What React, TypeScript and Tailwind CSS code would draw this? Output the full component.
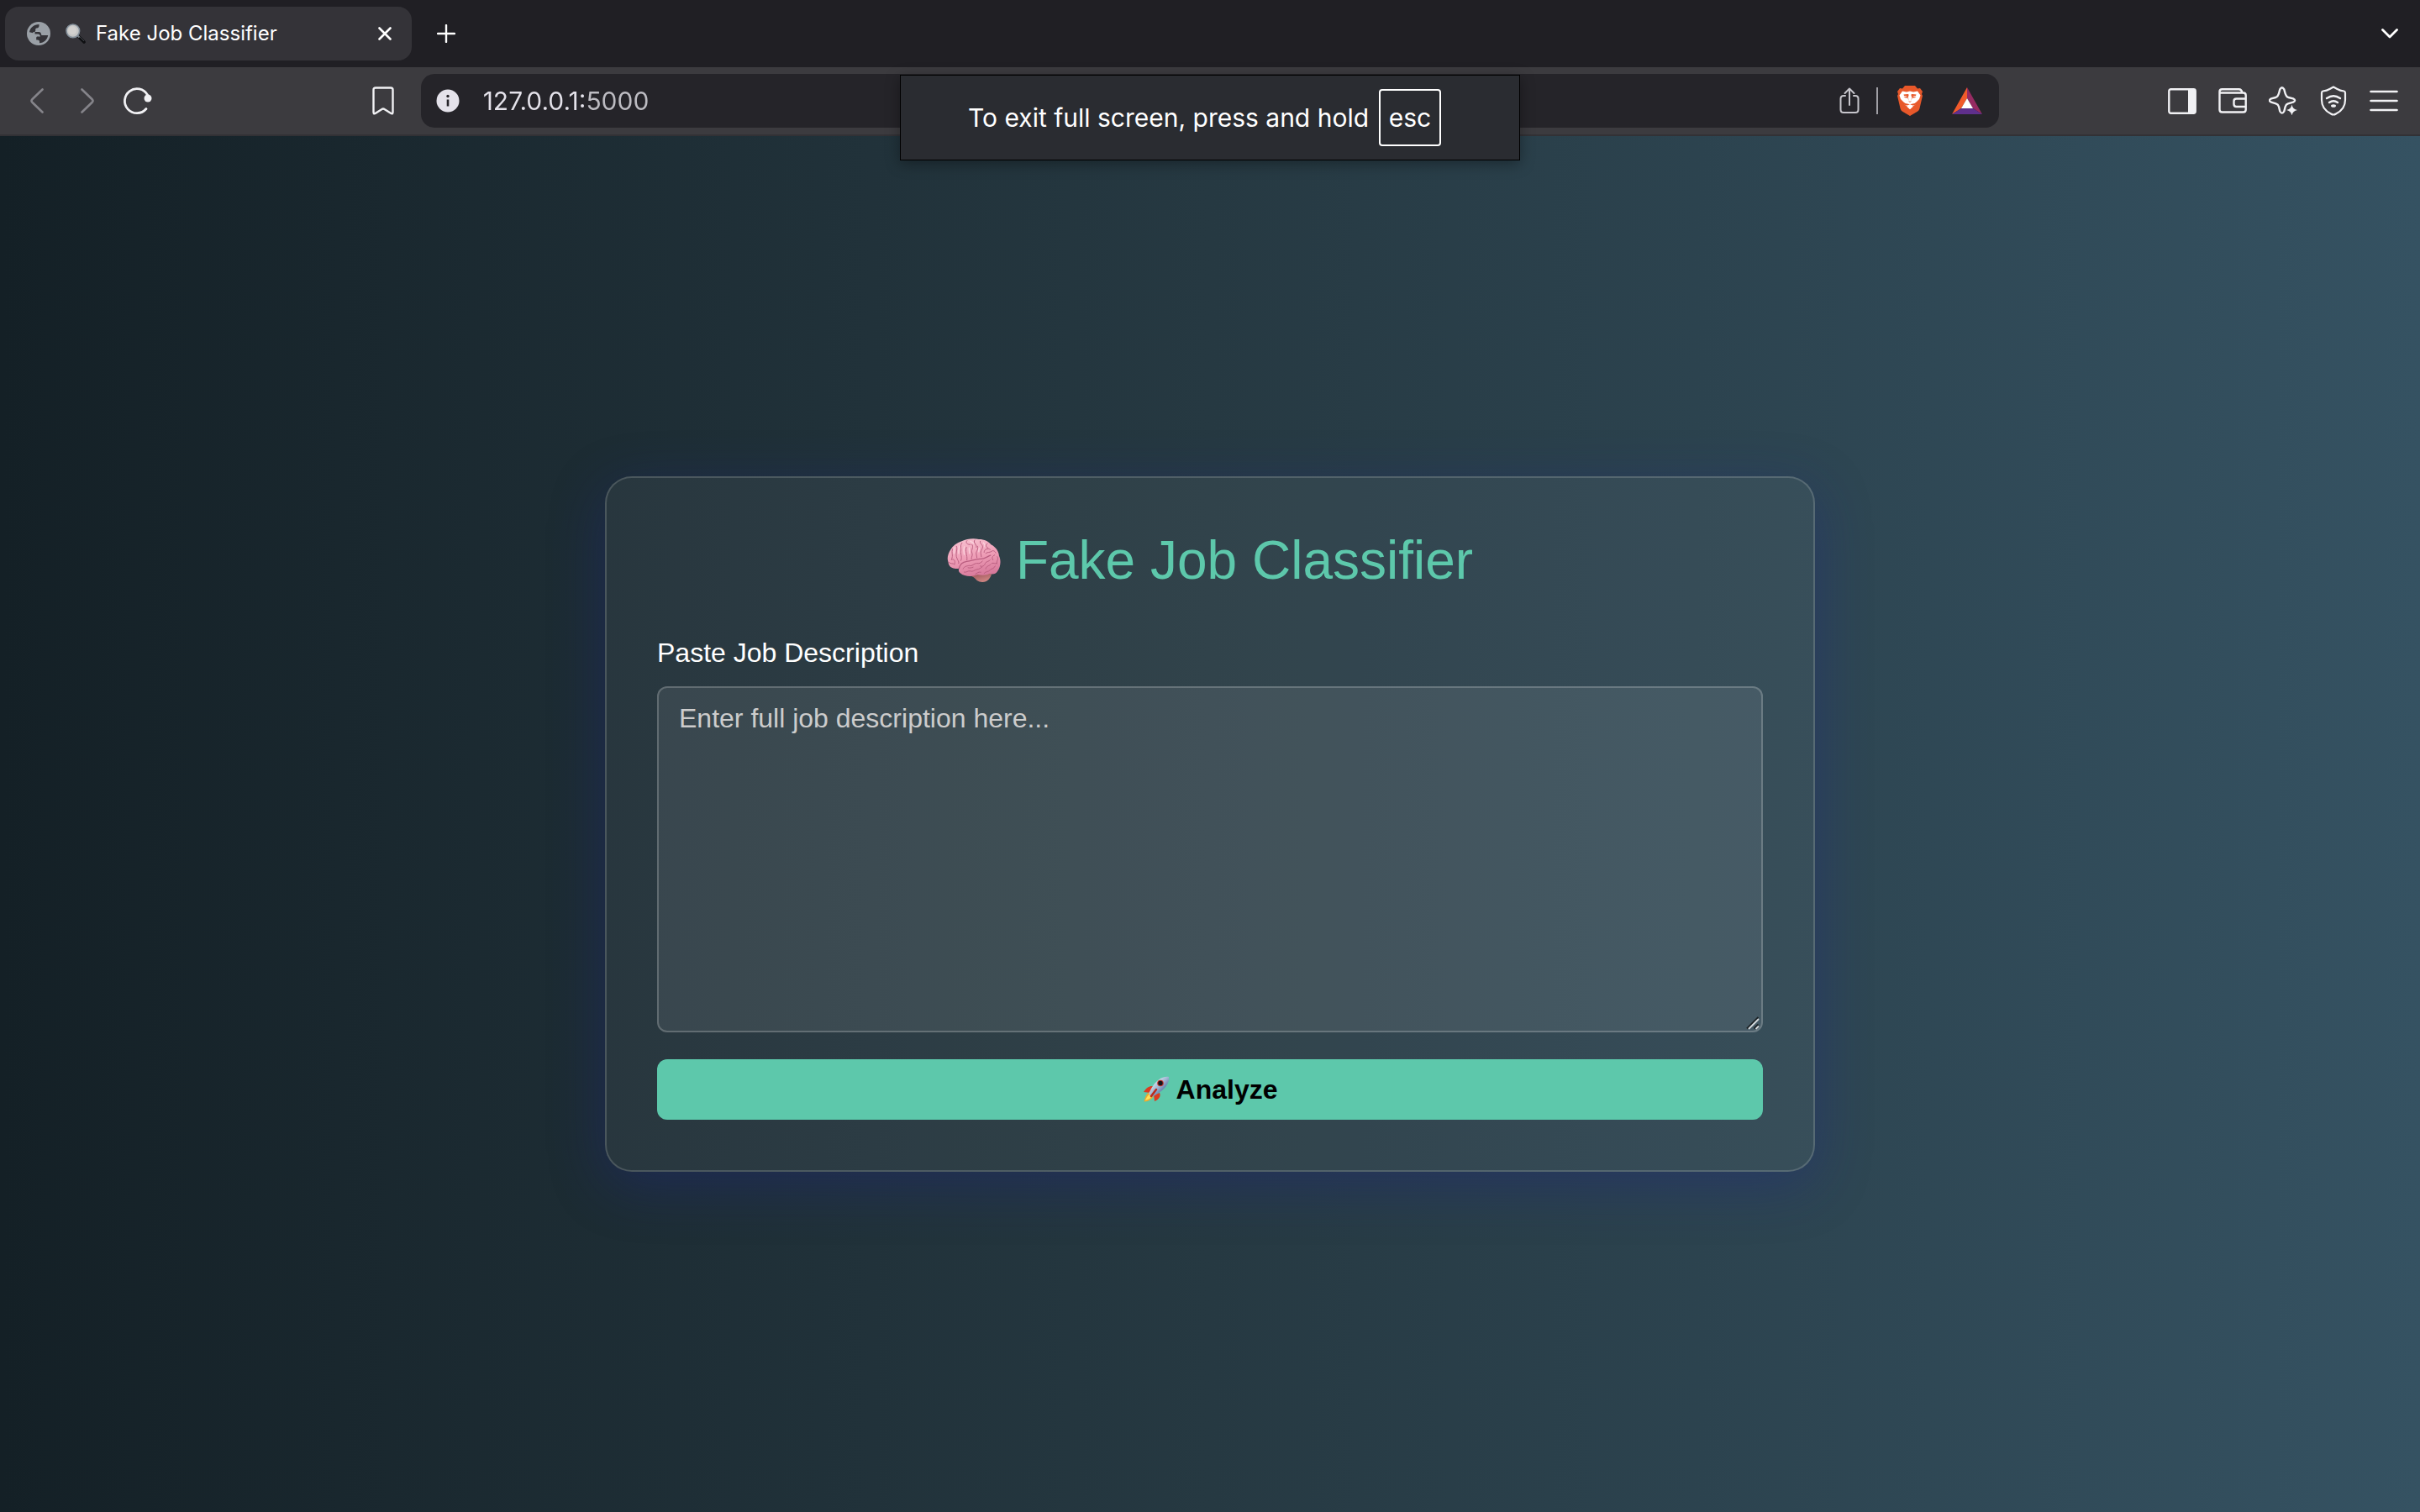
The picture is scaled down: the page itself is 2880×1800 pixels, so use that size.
import React from "react";

function Globe() {
  return (
    <svg viewBox="0 0 28 28" className="size-7 shrink-0" aria-hidden="true">
      <circle cx="14" cy="14" r="14" fill="#9aa0a6" />
      <path d="M3 12.200C3.800 7 8.500 3 14.500 3v1.800c0 1.600-1.200 2.700-2.700 2.700-1 0-1.600.6-1.600 1.500v1.500c0 .9-.6 1.500-1.500 1.500-1 0-1.500.4-1.500 1.200z" fill="#343338" />
      <path d="M9.500 12h4.800c1.500 0 2.700 1.200 2.700 2.700 0 .8.600 1.300 1.400 1.300h6.800c-.8 5-4.800 9-10.200 9.200v-1.700c0-1.300-1-2-2.300-2h-1.500v-2.700c0-.8.600-1.400 1.400-1.400h3.400c-.2-1.800-1.300-2.900-3-2.900H9.500z" fill="#343338" />
    </svg>
  );
}

function Magnifier() {
  return (
    <svg viewBox="0 0 24 24" className="size-6 shrink-0" aria-hidden="true">
      <path d="M15.500 15.500l6.500 6.500" stroke="#0e0f11" strokeWidth="3.600" strokeLinecap="round" />
      <path d="M13.500 13.500l3 3" stroke="#7b838a" strokeWidth="2" />
      <path d="M17 16l5 5" stroke="#4a4e53" strokeWidth="0.900" />
      <circle cx="8.800" cy="8.800" r="7.800" fill="#c6c7c6" stroke="#84909b" strokeWidth="1.600" />
      <circle cx="8.200" cy="8.200" r="5" fill="#d2d1cf" />
    </svg>
  );
}

function Brain() {
  return (
    <svg viewBox="51 28 192 158" className="h-[52px] w-16 shrink-0" aria-hidden="true">
      <defs>
        <linearGradient id="cortex" x1="0.3" y1="0" x2="0.6" y2="1">
          <stop offset="0" stopColor="#f7c0cf" />
          <stop offset="0.5" stopColor="#ee9db6" />
          <stop offset="1" stopColor="#d6789a" />
        </linearGradient>
        <linearGradient id="cerebellum" x1="0" y1="0" x2="0.6" y2="1">
          <stop offset="0" stopColor="#8f4a50" />
          <stop offset="1" stopColor="#cf8583" />
        </linearGradient>
      </defs>
      <path d="M132 160c8 6 18 8 26 20 12 8 32 8 42-3 8-8 12-18 11-28z" fill="url(#cerebellum)" />
      <path d="M54 112c-5-14 0-30 9-44 8-14 22-24 40-30 18-9 42-12 62-7 20 0 36 8 45 20 16 8 27 24 28 40 8 16 6 40-6 56-6 10-18 12-28 8-14 8-30 6-44 4-16 8-48 8-62-6-6-4-7-10-5-16-14 2-30-2-34-10-3-5-4-10-5-15z" fill="url(#cortex)" />
      <g fill="none" stroke="#ba5e80" strokeWidth="3" strokeLinecap="round" strokeLinejoin="round">
        <path d="M93 137c3-14 14-24 28-26 18-2 30-8 48-9 16 2 24-8 38-13" strokeWidth="4" />
        <path d="M70 66c-6 14 4 22-4 38M66 104c8-2 14 2 12 14M84 56c6 12-6 28 2 44 2 8 8 10 6 18M104 44c-8 10-2 20-4 30-2 12 6 22 0 34M120 60c-6 12 4 28 2 46M122 36c-8 8 4 16 12 14M140 50c8 8-4 20 0 30 4 8-2 14-2 22M150 34c-8 10 8 14 6 26M160 56c6 12-8 20-4 30l2 12M170 38c-4 10 12 12 8 24-2 8-8 12-6 20l2 12M196 46c-8 6-6 14 2 16M184 78c0-12 14-16 22-10M190 82c6-6 16-2 22-8 4-4 12 0 14 6M222 88c-8 4-12 10-6 18M232 94c6 10-4 14-2 26" />
        <path d="M108 138c4-10 14-10 22-12 12 4 16-8 28-8 10 2 14-2 20-8M112 150c10 2 12-6 22-4 10 4 14-4 24-6 10 0 12-6 18-8M170 128c8 4 16-2 18-10 4-8 14-6 18-12M152 158c6-4 10-10 20-8M190 138c0-10 12-10 18-16M184 154c6-8 16-4 22-12 6-6 14-4 18-14M212 118c8-4 10 4 16 0M126 134c6 2 12 0 18-2" />
        <path d="M56 114c6 8 14 2 22 8" />
      </g>
      <g fill="none" stroke="#fcdbe4" strokeWidth="4" strokeLinecap="round" opacity="0.8">
        <path d="M76 62c-2 8 0 12-1 20M94 56c-2 10-3 16-2 26M112 58c-3 10-2 20 0 28M130 62c-1 8 1 14 1 20M134 38c6 2 10 6 12 8M166 62c0 6-2 10-1 14M182 44c4 4 6 8 4 14" />
      </g>
    </svg>
  );
}

function Rocket() {
  return (
    <svg viewBox="0 0 32 32" className="h-8 w-8 shrink-0" aria-hidden="true">
      <defs>
        <linearGradient id="hull" x1="0" y1="0" x2="1" y2="1">
          <stop offset="0.200" stopColor="#e6edf5" />
          <stop offset="0.500" stopColor="#9db3d0" />
          <stop offset="0.800" stopColor="#3f5f96" />
        </linearGradient>
      </defs>
      <path d="M12 12c-4-.5-8 2-11 7l8 1zM20 20c2 4-1 8-6 10l-1-8z" fill="#dd3a20" />
      <path d="M9 19c-4 1-6 5-7.500 11.500 6 0 9-3 11.500-6.500z" fill="#f0a92b" />
      <path d="M8 22c-2 1-4 4-5 7 3-1 6-2 7-4z" fill="#ffe25a" />
      <path d="M31 1c-8-1-15 4-21 14l-3 6 4 4 5-3C26 16 32 9 31 1z" fill="url(#hull)" />
      <path d="M16 16l-6 8" stroke="#bb2a1c" strokeWidth="2.500" strokeLinecap="round" />
      <circle cx="21" cy="8.500" r="3.800" fill="#c2352d" />
      <circle cx="21" cy="8.500" r="2.700" fill="#15161c" />
    </svg>
  );
}

const stroke = {
  fill: "none",
  stroke: "currentColor",
  strokeLinecap: "round" as const,
  strokeLinejoin: "round" as const,
};

function BraveLion() {
  return (
    <svg viewBox="0 0 32 36" className="h-9 w-8" aria-hidden="true">
      <path d="M10 0h12l3 3.500 3-.5 3 4-1 3 1 2-3.500 15c-.5 2-1.500 3-3 4L16 36l-8.500-5C6 30 5 29 4.500 27L1 12l1-2-1-3 3-4 3 .5z" fill="#e8582a" />
      <path d="M7 6.500L12 7.500l4-1 4 1 5-1 3.500 5-1.500 4.500-5 5 .5 1.500-3 2-3.500 3.500L12.500 24.500l-3-2 .5-1.500-5-5L3.500 11.500z" fill="#fff" />
      <path d="M8.500 10.500l5-.5c1 .2 1.200.8 1 1.600l-1 3.400 1 3 1.500 1 1.500-1 1-3-1-3.400c-.2-.8 0-1.400 1-1.600l5 .5-.5 1.500-4 .5c1 .5 2 1 4.500.8-1.500 1.400-3.500 1.700-5.500.7l-.5 4.500-1.500 1.500-1.500-1.500-.5-4.500c-2 1-4 .7-5.500-.7 2.500.2 3.500-.3 4.500-.8l-4-.5z" fill="#e8582a" />
      <path d="M7.500 19.500l3 1.500 5.500 1.200 5.500-1.200 3-1.500-2 3.500-3 .5-3.500-1.200-3.500 1.200-3-.5z" fill="#e8582a" />
      <path d="M16 23.500l3.500 1.500-3.500 3-3.500-3z" fill="#fff" />
    </svg>
  );
}

function TabStrip() {
  return (
    <div className="flex h-20 items-center bg-[#201f24] pr-[26px] pl-1.5 text-white">
      <div className="flex h-16 w-[484px] items-center rounded-2xl bg-[#343338] pr-[22px] pl-[26px]">
        <Globe />
        <span className="ml-[18px] flex flex-1 items-center gap-3 text-[24px] leading-8">
          <Magnifier />
          Fake Job Classifier
        </span>
        <button type="button" aria-label="Close tab" className="p-0.5">
          <svg viewBox="0 0 16 16" className="size-4" {...stroke} strokeWidth="2.600">
            <path d="M1.500 1.500l13 13M14.500 1.500l-13 13" />
          </svg>
        </button>
      </div>
      <button type="button" aria-label="New tab" className="ml-[30px]">
        <svg viewBox="0 0 22 22" className="size-[22px]" {...stroke} strokeWidth="2.400">
          <path d="M11 1v20M1 11h20" />
        </svg>
      </button>
      <button type="button" aria-label="Search tabs" className="ml-auto">
        <svg viewBox="0 0 20 12" className="h-3 w-5" {...stroke} strokeWidth="2.800">
          <path d="M1.500 1.500L10 10l8.500-8.500" />
        </svg>
      </button>
    </div>
  );
}

function Toolbar() {
  return (
    <div className="flex h-[82px] items-center border-b-2 border-[#323135] bg-[#3c3b3f] pr-[26px] pl-9 text-[#f1f1f4]">
      <button type="button" aria-label="Back" className="text-[#85848a]">
        <svg viewBox="0 0 16 30" className="h-[30px] w-4" {...stroke} strokeWidth="2.600">
          <path d="M14.500 1.500L2.300 13.300q-1.600 1.700 0 3.400L14.500 28.500" />
        </svg>
      </button>
      <button type="button" aria-label="Forward" className="ml-11 text-[#85848a]">
        <svg viewBox="0 0 16 30" className="h-[30px] w-4" {...stroke} strokeWidth="2.600">
          <path d="M1.500 1.500l12.200 11.800q1.600 1.700 0 3.400L1.500 28.500" />
        </svg>
      </button>
      <button type="button" aria-label="Reload" className="mr-[60px] ml-[34px]">
        <svg viewBox="0 0 36 34" className="h-[34px] w-9" {...stroke} strokeWidth="2.800">
          <path d="M28 26.500A14.500 14.500 0 1 1 29.500 10" />
          <circle cx="30" cy="14" r="4.500" fill="currentColor" stroke="none" />
        </svg>
      </button>
      <button type="button" aria-label="Bookmark this page" className="ml-auto">
        <svg viewBox="0 0 26 34" className="h-[34px] w-[26px]" {...stroke} strokeWidth="2.400">
          <path d="M4 1.500h18q2.500 0 2.500 2.500v26.500q0 3-2.500 1.300L14.500 27q-1.500-1.200-3 0L4 31.800q-2.500 1.700-2.500-1.300V4Q1.500 1.500 4 1.500z" />
        </svg>
      </button>
      <div className="ml-8 flex h-16 w-2/3 items-center rounded-2xl bg-[#252429] pr-5 pl-[18px]">
        <svg viewBox="0 0 28 28" className="size-7" aria-hidden="true">
          <circle cx="14" cy="14" r="13.500" fill="#e4e2ea" />
          <path d="M14 12.500v8" stroke="#252429" strokeWidth="2.600" />
          <circle cx="14" cy="8.500" r="1.700" fill="#252429" />
        </svg>
        <input
          type="text"
          aria-label="Address"
          defaultValue="127.0.0.1:5000"
          className="ml-7 min-w-0 flex-1 bg-linear-to-r from-[#e4e2ea] from-[120px] to-[#bdbcc2] to-[120px] bg-clip-text text-[30px] leading-10 text-transparent outline-none"
        />
        <button type="button" aria-label="Share" className="text-[#c6c5cb]">
          <svg viewBox="0 0 24 32" className="h-8 w-6" {...stroke} strokeWidth="2">
            <path d="M7 10H5q-3.500 0-3.500 3.500v13Q1.500 30 5 30h14q3.500 0 3.500-3.500v-13q0-3.500-3.500-3.500h-2M12 21V2M6.500 7L12 1.500 17.500 7" />
          </svg>
        </button>
        <span className="ml-5 h-8 w-0.5 bg-[#a09fa5]" />
        <button type="button" aria-label="Brave Shields" className="ml-[22px]">
          <BraveLion />
        </button>
        <button type="button" aria-label="Brave Rewards" className="ml-[34px]">
          <svg viewBox="0 0 36 32" className="h-8 w-9">
            <path d="M18 0L0 32l11-7 7-12z" fill="#f15a2b" />
            <path d="M18 0l18 32-11-7-7-12z" fill="#962b62" />
            <path d="M0 32h36l-11-7H11z" fill="#5f2f8c" />
            <path d="M18 13l-7 12h14z" fill="#fff" />
          </svg>
        </button>
      </div>
      <div className="ml-auto flex items-center gap-[26px]">
        <button type="button" aria-label="Sidebar">
          <svg viewBox="0 0 34 31" className="h-[31px] w-[34px]" {...stroke} strokeWidth="2.400">
            <rect x="1.300" y="1.300" width="31.400" height="28.400" rx="2.200" />
            <path d="M24 1.500h8v28h-8z" fill="currentColor" stroke="none" />
          </svg>
        </button>
        <button type="button" aria-label="Wallet">
          <svg viewBox="0 0 34 30" className="h-[30px] w-[34px]" {...stroke} strokeWidth="2.400">
            <path d="M1.500 5.500v20q0 3 3 3h25.200q3 0 3-3V8.500q0-3-3-3zV4q0-2.700 3-2.700h20q3 0 4 4M32.500 12.500H21.500q-3 0-3 3v3.500q0 3 3 3h11" />
          </svg>
        </button>
        <button type="button" aria-label="Leo AI">
          <svg viewBox="0 0 34 34" className="size-[34px]" {...stroke} strokeWidth="2.400">
            <path d="M13.300 3.400q2.500-4.200 5 0c1 3 1.300 9 5.200 9.600l5.500 1.400q4.200 2 0 4.300L23 20.400q-2.500.8-3.300 3.600l-1.400 5.500q-2.500 4.200-5 0L12 24q-.8-2.800-3.500-3.600L3 18.700q-4.200-2.200 0-4.300l5.200-1.400c3.900-.6 4.100-6.600 5.100-9.600z" />
            <path d="M27.500 21.500q1 5.500 6.500 6.500-5.500 1-6.500 6.500-1-5.500-6.500-6.500 5.500-1 6.500-6.500z" fill="currentColor" stroke="none" />
          </svg>
        </button>
        <button type="button" aria-label="VPN">
          <svg viewBox="0 0 34 36" className="h-9 w-[34px]" {...stroke} strokeWidth="2.200">
            <path d="M17 1.500l4 2.200q4 2.300 8.500 2.800 1.500.3 1.500 2V17c0 8-5 13.500-11 16.500q-3 2-6 0C8 30.500 3 25 3 17V8.500q0-1.700 1.500-2Q9 6 13 3.700z" />
            <path d="M9 15q8-5.500 16 0M12 20q5-3.500 10 0" strokeWidth="2.400" />
            <ellipse cx="17" cy="24" rx="3" ry="1.800" fill="currentColor" stroke="none" />
          </svg>
        </button>
        <button type="button" aria-label="Menu">
          <svg viewBox="0 0 34 26" className="h-[26px] w-[34px]" {...stroke} strokeWidth="2.600">
            <path d="M1.500 2h31M1.500 13h31M1.500 24h31" />
          </svg>
        </button>
      </div>
    </div>
  );
}

function FullScreenNotice() {
  return (
    <div
      role="status"
      className="absolute top-[89px] left-1/2 flex h-[102px] w-[738px] -translate-x-1/2 items-center gap-3 border border-black bg-[#2a2c31] pl-20 text-[30px] leading-10 whitespace-nowrap text-white shadow-[0_4px_16px_rgba(0,0,0,0.35)]"
    >
      To exit full screen, press and hold
      <kbd className="flex h-[68px] w-[74px] items-center justify-center rounded-sm border-2 border-white font-['Inter',sans-serif]">
        esc
      </kbd>
    </div>
  );
}

function ClassifierCard() {
  return (
    <form
      onSubmit={(event) => event.preventDefault()}
      className="flex w-full max-w-[1440px] flex-col rounded-4xl border-2 border-white/20 bg-white/5 bg-clip-padding p-[60px] shadow-[0_16px_64px_rgba(31,38,135,0.37)]"
    >
      <h1 className="flex items-center justify-center gap-[18px] text-[64px] leading-[76px] text-[#5dc8ab]">
        <Brain />
        Fake Job Classifier
      </h1>
      <label htmlFor="job-description" className="mt-12 text-[32px] leading-12 text-white">
        Paste Job Description
      </label>
      <div className="relative mt-4 flex">
        <textarea
          id="job-description"
          rows={8}
          placeholder="Enter full job description here..."
          className="w-full resize-none rounded-xl border-2 border-white/20 bg-white/8 px-6 py-3 text-[32px] leading-12 text-white outline-none placeholder:text-[#cccccc]"
        />
        <svg
          viewBox="0 0 18 18"
          className="pointer-events-none absolute right-0.5 bottom-0.5 size-[18px]"
          fill="none"
          aria-hidden="true"
        >
          <path d="M1 15.500L14.500 2M9.500 15.500L14.500 10.500" stroke="#1c2226" strokeWidth="2" />
          <path d="M3 16L15 4M11.500 16L15 12.500" stroke="#d5dadd" strokeWidth="1.800" />
        </svg>
      </div>
      <button
        type="submit"
        className="mt-8 flex h-[72px] items-center justify-center gap-2 rounded-xl bg-[#5dc8ab] text-[32px] leading-12 font-bold text-black"
      >
        <Rocket />
        Analyze
      </button>
    </form>
  );
}

export default function App() {
  return (
    <div className="relative flex min-h-screen flex-col font-['Inter',sans-serif]">
      <header>
        <TabStrip />
        <Toolbar />
      </header>
      <main className="flex flex-1 items-center justify-center bg-linear-to-r/srgb from-[#142026] via-[#263942] to-[#355262] font-['Liberation_Sans',sans-serif]">
        <ClassifierCard />
      </main>
      <FullScreenNotice />
    </div>
  );
}
